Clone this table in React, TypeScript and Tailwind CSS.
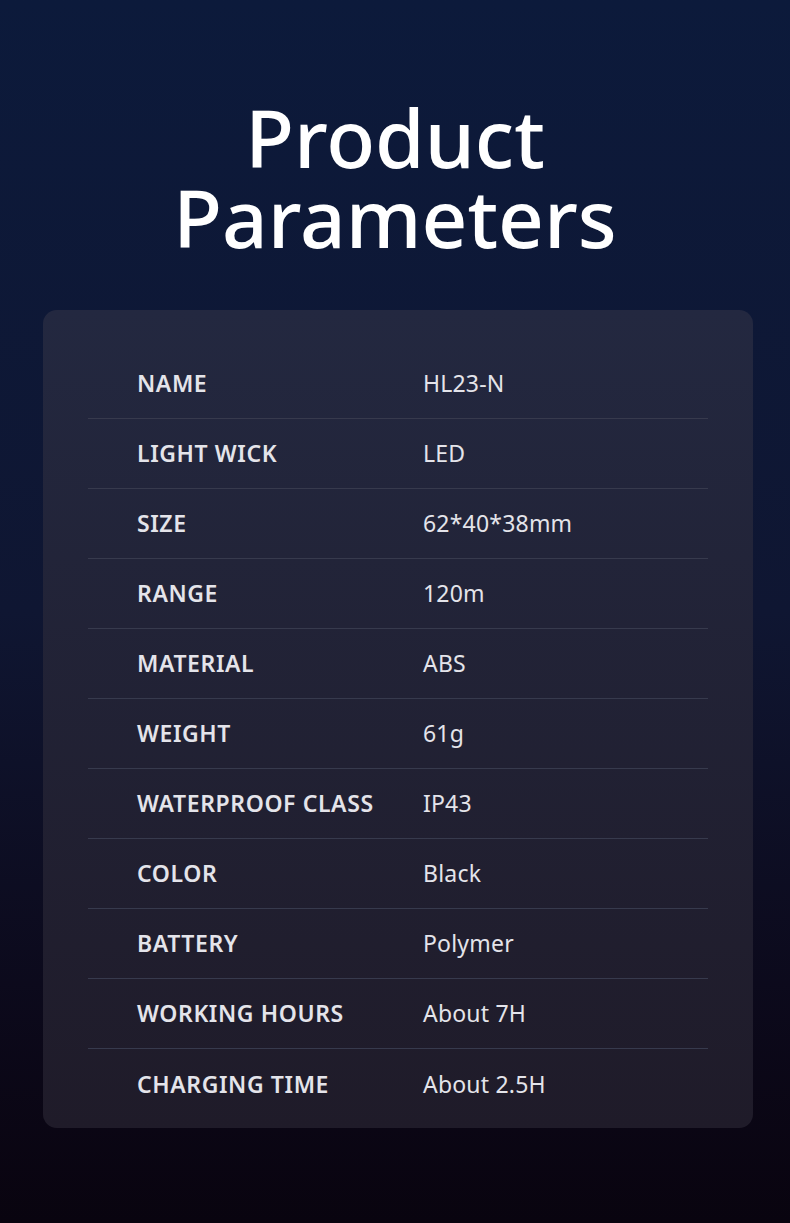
import React from 'react'

const params: [string, string][] = [
    ['NAME', 'HL23-N'],
    ['LIGHT WICK', 'LED'],
    ['SIZE', '62*40*38mm'],
    ['RANGE', '120m'],
    ['MATERIAL', 'ABS'],
    ['WEIGHT', '61g'],
    ['WATERPROOF CLASS', 'IP43'],
    ['COLOR', 'Black'],
    ['BATTERY', 'Polymer'],
    ['WORKING HOURS', 'About 7H'],
    ['CHARGING TIME', 'About 2.5H'],
]

export default function App() {
    return (
        <div className="w-[790px] h-[1223px] bg-gradient-to-b from-[#0c1a3b] via-[#0f1632] to-[#09040f] font-['Noto_Sans','Open_Sans',sans-serif] flex flex-col items-center">
            <h1 className="mt-[97px] text-white text-[80px] leading-[80px] font-medium text-center">
                Product
                <br />
                Parameters
            </h1>
            <div className="mt-[53px] ml-[6px] w-[710px] h-[818px] rounded-[14px] bg-gradient-to-b from-[#232840] to-[#1f1b29] pt-[39px] px-[45px]">
                {params.map(([label, value], i) => (
                    <div
                        key={label}
                        className={
                            'h-[70px] flex items-center text-[23px] text-[#e4e4ea] ' +
                            (i < params.length - 1 ? 'border-b border-[#373a4d]' : '')
                        }
                    >
                        <span className="w-[335px] pl-[49px] font-semibold tracking-[0.6px]">{label}</span>
                        <span className="tracking-[0.2px]">{value}</span>
                    </div>
                ))}
            </div>
        </div>
    )
}
